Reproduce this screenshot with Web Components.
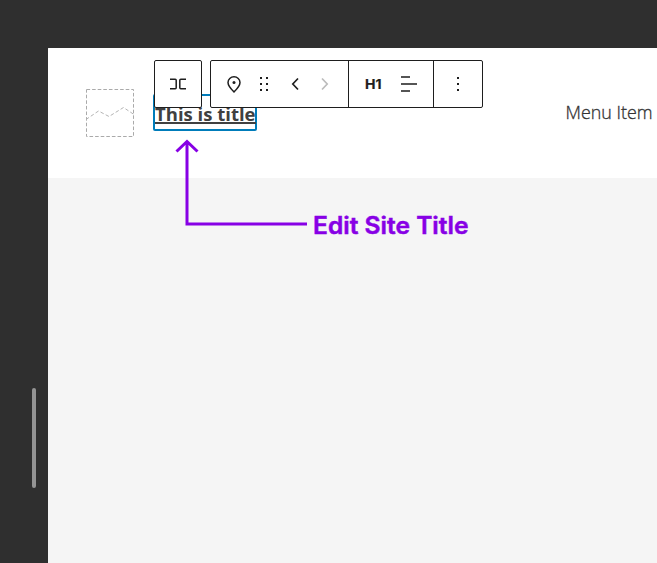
<!DOCTYPE html>
<html lang="en"><head><meta charset="utf-8"><title>Site editor</title>
<style>html,body{margin:0;height:100%;overflow:hidden;background:#2f2f2f}</style></head>
<body><site-editor></site-editor>
<script>
const define=(name,html)=>customElements.define(name,class extends HTMLElement{
 constructor(){super();this.attachShadow({mode:'open'}).innerHTML=html;}
});
define('site-logo',`<style>:host{display:block;width:48px;height:48px}svg{display:block}</style>
<svg width="48" height="48" fill="none" stroke="#aaa"><rect x=".5" y=".5" width="47" height="47" stroke-dasharray="3.6 2"/><path d="M0 30.5L12.5 22L23 27.5L37.5 18.5L48 25.5" stroke="#b4b4b4" stroke-dasharray="3.6 2.2"/></svg>`);
define('site-title',`<style>:host{display:block;box-sizing:border-box;width:104px;height:37px;border:2px solid #007cba;border-radius:2px}
svg{display:block;overflow:visible}text{font:700 18.5px "Open Sans","Noto Sans",sans-serif;fill:#404040}</style>
<svg width="100" height="33"><text x="0" y="25" textLength="100.5" lengthAdjust="spacingAndGlyphs">This is title</text><path d="M0 27h101" stroke="#404040" stroke-width="2"/></svg>`);
define('nav-item',`<style>:host{display:block;width:86px;height:26px}svg{display:block;overflow:visible}text{font:300 17.6px "Open Sans","Noto Sans",sans-serif;fill:#333;stroke:#333;stroke-width:.3}</style>
<svg width="86" height="26"><text x="-0.5" y="19" textLength="87" lengthAdjust="spacingAndGlyphs">Menu Item</text></svg>`);
define('tool-group',`<style>:host{display:flex;box-sizing:border-box;height:48px;border:1px solid #1e1e1e;border-radius:2px;background:#fff}</style><slot></slot>`);
define('tool-segment',`<style>:host{display:block;box-sizing:border-box;height:46px}:host([divided]){border-right:1px solid #1e1e1e}</style><slot></slot>`);
define('callout-note',`<style>:host{display:block}svg{display:block}text{font:600 24px Inter,sans-serif;fill:#8700e5;stroke:#8700e5;stroke-width:.5}</style>
<svg width="310" height="115"><path d="M137 89H17V6M6.500 16.500L17 6.500L27.500 16.500" fill="none" stroke="#8700e5" stroke-width="3"/><text x="143" y="99" textLength="155.500" lengthAdjust="spacingAndGlyphs">Edit Site Title</text></svg>`);
define('resize-handle',`<style>:host{display:block;width:4px;height:100px;border-radius:2px;background:#949494}</style>`);
define('block-toolbar',`<style>:host{display:flex;gap:8px}svg{display:block}text{font:700 13.500px Inter,sans-serif;fill:#1e1e1e;stroke:#1e1e1e;stroke-width:.2}</style>
<tool-group><tool-segment><svg width="46" height="46" viewBox="155 61 46 46" fill="none" stroke="#1e1e1e" stroke-width="1.500"><path d="M170 79.200H175.200Q176.200 79.200 176.200 80.200V87.800Q176.200 88.800 175.200 88.800H170M186 79.200H180.800Q179.800 79.200 179.800 80.200V87.800Q179.800 88.800 180.800 88.800H186"/></svg></tool-segment></tool-group>
<tool-group>
<tool-segment divided><svg width="137" height="46" viewBox="211 61 137 46" fill="none"><path d="M234 76.800C230.700 76.800 228 79.300 228 82.500C228 86.100 231.800 89.800 234 92C236.200 89.800 240 86.100 240 82.500C240 79.300 237.300 76.800 234 76.800Z" stroke="#1e1e1e" stroke-width="1.500"/><circle cx="234" cy="82.500" r="1.500" fill="#1e1e1e"/><path d="M260 77h2v2h-2zM266 77h2v2h-2zM260 83h2v2h-2zM266 83h2v2h-2zM260 89h2v2h-2zM266 89h2v2h-2z" fill="#1e1e1e"/><path d="M298 78.500L292.800 84L298 89.500" stroke="#1e1e1e" stroke-width="1.700"/><path d="M322 78.500L327.200 84L322 89.500" stroke="#bcbcbc" stroke-width="1.700"/></svg></tool-segment>
<tool-segment divided><svg width="84" height="46" viewBox="349 61 84 46"><text x="365" y="89" textLength="16.500" lengthAdjust="spacingAndGlyphs">H1</text><path d="M401 76h9v2h-9zM401 83h16v2h-16zM401 90h9v2h-9z" fill="#555"/></svg></tool-segment>
<tool-segment><svg width="48" height="46" viewBox="434 61 48 46"><path d="M457 77h2v2h-2zM457 83h2v2h-2zM457 89h2v2h-2z" fill="#1e1e1e"/></svg></tool-segment>
</tool-group>`);
define('site-editor',`<style>
:host{display:grid;grid-template:48px 515px/48px 609px;width:657px;height:563px;background:#2f2f2f;position:relative}
aside{grid-area:2/1;box-sizing:border-box;padding:340px 0 0 32px}
main{grid-area:2/2;background:#f5f5f5;border-top-left-radius:1px;overflow:hidden}
header{display:flex;box-sizing:border-box;height:130px;background:#fff;padding:41px 5px 0 38px;align-items:flex-start}
site-title{margin:5px 0 0 19px}nav-item{margin:11px 0 0 auto}
block-toolbar{position:absolute;left:154px;top:60px}
callout-note{position:absolute;left:170px;top:135px}
</style><aside><resize-handle></resize-handle></aside><main><header><site-logo></site-logo><site-title></site-title><nav-item></nav-item></header></main><block-toolbar></block-toolbar><callout-note></callout-note>`);
</script></body></html>
